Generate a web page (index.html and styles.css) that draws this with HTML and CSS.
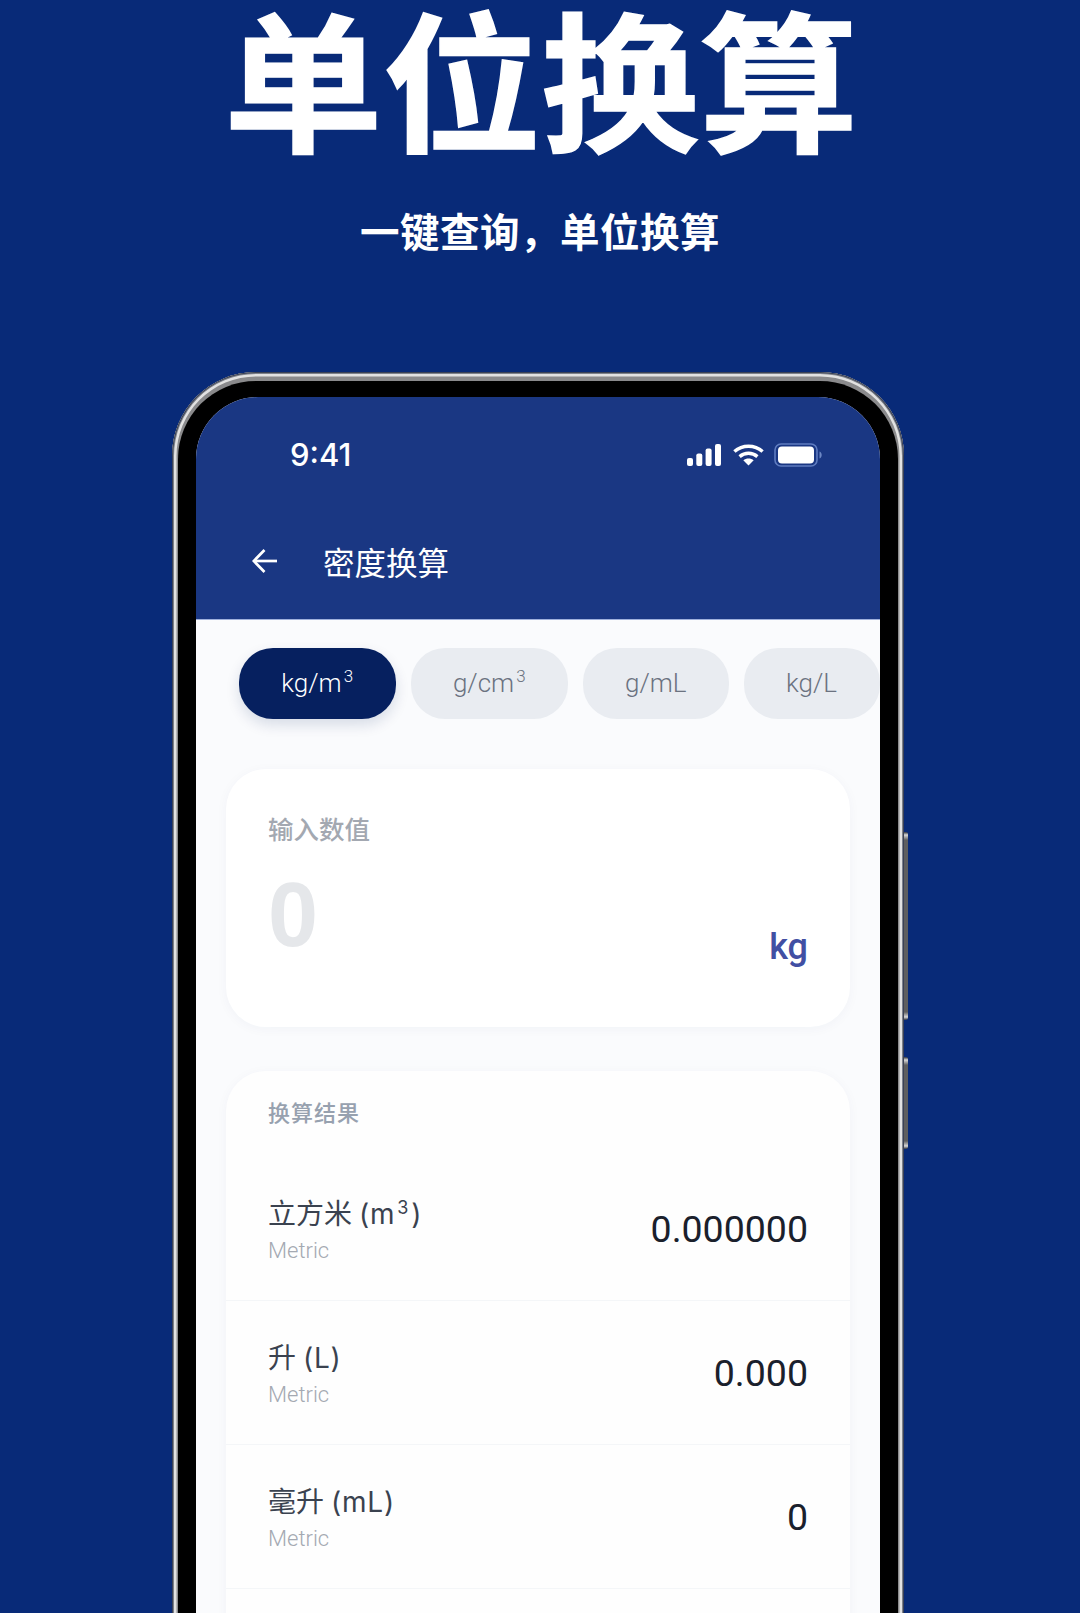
FILE: index.html
```html
<!DOCTYPE html>
<html lang="zh-CN">
<head>
<meta charset="utf-8">
<title>单位换算</title>
<link rel="stylesheet" href="styles.css">
</head>
<body>
<main class="poster">
  <h1 class="headline">单位换算</h1>
  <p class="subline">一键查询，单位换算</p>
  <div class="phone">
    <span class="side-btn side-btn-a"></span>
    <span class="side-btn side-btn-b"></span>
    <div class="rim">
      <div class="bezel">
        <div class="screen">
          <header class="app-header">
            <div class="status">
              <span class="time">9:41</span>
              <div class="status-icons">
                <svg class="ic-signal" width="34" height="22" viewBox="0 0 34 22" fill="#fff"><rect x="0" y="14" width="6" height="8" rx="2"/><rect x="9.3" y="9.5" width="6" height="12.5" rx="2"/><rect x="18.6" y="4.5" width="6" height="17.5" rx="2"/><rect x="28" y="0" width="6" height="22" rx="2"/></svg>
                <svg class="ic-wifi" width="31" height="22" viewBox="0 0 31 22" fill="none" stroke="#fff" stroke-width="3.4"><path d="M1.4 7.6C9.4.4 21.6.4 29.6 7.6"/><path d="M6.6 12.6c5.2-4.4 12.6-4.4 17.8 0"/><path d="M15.5 21.6l-5.2-5.4c3-2.4 7.4-2.4 10.4 0z" fill="#fff" stroke="none"/></svg>
                <svg class="ic-battery" width="48" height="24" viewBox="0 0 48 24" fill="none"><rect x="1" y="1" width="42" height="22" rx="6" stroke="#5f7cc0" stroke-width="1.6"/><rect x="4" y="3.6" width="36" height="16.8" rx="4" fill="#fff"/><path d="M45.5 8.5c1.6.6 2.2 2 2.2 3.5s-.6 2.9-2.2 3.5z" fill="#6d87c4"/></svg>
              </div>
            </div>
            <nav class="nav">
              <svg class="ic-back" width="26" height="24" viewBox="0 0 26 24" fill="none" stroke="#fff" stroke-width="2.7"><path d="M25 12H2"/><path d="M12.5 1L1.8 12l10.7 11"/></svg>
              <span class="nav-title">密度换算</span>
            </nav>
          </header>
          <div class="body">
            <div class="chips">
              <span class="chip chip-on">kg/m<span class="sup">3</span></span>
              <span class="chip">g/cm<span class="sup">3</span></span>
              <span class="chip chip-mid">g/mL</span>
              <span class="chip chip-last">kg/L</span>
            </div>
            <section class="card card-input">
              <div class="input-label">输入数值</div>
              <div class="input-row">
                <span class="input-value">0</span>
                <span class="input-unit">kg</span>
              </div>
            </section>
            <section class="card card-results">
              <div class="results-label">换算结果</div>
              <div class="row">
                <div><div class="row-name">立方米 <span class="lat">(m<span class="sup-name">3</span>)</span></div><div class="row-sub">Metric</div></div>
                <div class="row-value">0.000000</div>
              </div>
              <div class="row">
                <div><div class="row-name">升 <span class="lat">(L)</span></div><div class="row-sub">Metric</div></div>
                <div class="row-value">0.000</div>
              </div>
              <div class="row">
                <div><div class="row-name">毫升 <span class="lat">(mL)</span></div><div class="row-sub">Metric</div></div>
                <div class="row-value">0</div>
              </div>
            </section>
          </div>
        </div>
      </div>
    </div>
  </div>
</main>
</body>
</html>
```

FILE: styles.css
```css
* { box-sizing: border-box; }
html, body { margin: 0; height: 1613px; overflow: hidden; }
body {
  background: #082a78;
  font-family: Roboto, "Noto Sans CJK SC", sans-serif;
}
.poster {
  height: 1613px;
  display: flex;
  flex-direction: column;
  overflow: hidden;
}
.headline {
  flex: none;
  margin: 0;
  height: 170px;
  padding-left: 2px;
  text-align: center;
  color: #fff;
  font-size: 151px;
  line-height: 150px;
  font-weight: 700;
  -webkit-text-stroke: 1.5px #fff;
  font-family: "Noto Sans CJK SC", sans-serif;
  transform: scaleX(1.05);
}
.subline {
  flex: none;
  margin: 36px 0 0;
  height: 48px;
  text-align: center;
  color: #fff;
  font-size: 39.5px;
  line-height: 48px;
  letter-spacing: .5px;
  font-weight: 700;
  font-family: "Noto Sans CJK SC", sans-serif;
}
.phone {
  position: relative;
  margin: 118px 0 0 172px;
  width: 732px;
  height: 1400px;
  flex: none;
}
.side-btn {
  position: absolute;
  right: -4px;
  width: 4px;
  background: linear-gradient(#30343d, #d8d8d8 3px, #5f5f5f 8px, #5f5f5f calc(100% - 8px), #d8d8d8 calc(100% - 3px), #30343d);
  border-radius: 0 2px 2px 0;
}
.side-btn-a { top: 460px; height: 188px; }
.side-btn-b { top: 685px; height: 92px; }
.rim {
  height: 100%;
  padding: 9px 6px 0;
  border-radius: 84px;
  background: #8a8a8c;
  box-shadow: inset 0 0 0 1px #3b4256, inset 0 0 0 2px #7d818a, inset 0 0 0 4.5px #e2e2e2;
}
.bezel {
  height: 100%;
  padding: 16px 18px 0;
  border-radius: 78px 78px 0 0;
  background: #000;
}
.screen {
  height: 100%;
  border-radius: 62px 62px 0 0;
  overflow: hidden;
  background: #fafbfd;
  display: flex;
  flex-direction: column;
}
.app-header {
  height: 223px;
  flex: none;
  background: #1a3783;
  border-bottom: 1px solid #9fb0dc;
  padding: 44px 58px 0 56px;
  color: #fff;
}
.status {
  display: flex;
  justify-content: space-between;
  align-items: center;
  height: 28px;
  padding-left: 38px;
}
.time { font-family: Inter, sans-serif; font-size: 31px; font-weight: 500; line-height: 28px; }
.status-icons { display: flex; align-items: center; gap: 12px; }
.ic-battery { margin-left: -2px; }
.nav {
  display: flex;
  align-items: center;
  gap: 45px;
  margin-top: 72px;
  height: 40px;
}
.nav-title {
  font-size: 31.5px;
  line-height: 40px;
  font-weight: 400;
  font-family: "Noto Sans CJK SC", sans-serif;
}
.body { flex: 1; min-height: 0; padding-top: 28px; display: flex; flex-direction: column; }
.chips {
  flex: none;
  display: flex;
  gap: 14.5px;
  padding-left: 42.5px;
  height: 71px;
  margin-bottom: 50px;
}
.chip {
  flex: none;
  width: 157.5px;
  height: 71px;
  border-radius: 34px;
  background: #e9ecf1;
  color: #6b7280;
  font-size: 26px;
  line-height: 71px;
  text-align: center;
  font-weight: 300;
}
.chip-on {
  background: #06205f;
  color: #fff;
  box-shadow: 0 6px 14px rgba(6, 32, 95, .14);
}
.chip-mid { width: 146.5px; }
.chip-last { width: 136px; }
.sup {
  display: inline-block;
  margin-left: 2px;
  font-size: 17px;
  line-height: 1;
  vertical-align: 10px;
}
.card {
  margin: 0 30px;
  background: #fff;
  border-radius: 40px;
  box-shadow: 0 2px 12px rgba(20, 40, 90, .04);
}
.card-input {
  flex: none;
  height: 258px;
  padding: 43px 42px 0;
  margin-bottom: 44px;
}
.input-label {
  color: #a3a8b1;
  font-size: 25.5px;
  line-height: 32px;
  font-weight: 500;
  font-family: "Noto Sans CJK SC", sans-serif;
}
.input-row {
  display: flex;
  justify-content: space-between;
  align-items: flex-start;
  margin-top: 26px;
}
.input-value {
  color: #e5e7ea;
  font-size: 90px;
  line-height: 90px;
  font-weight: 700;
  font-family: "Liberation Sans", sans-serif;
}
.input-unit {
  margin-top: 55px;
  color: #414fa3;
  font-size: 36px;
  line-height: 44px;
  font-weight: 500;
}
.card-results { flex: 1; background: #fefefe; }
.results-label {
  height: 86px;
  padding: 26px 42px 0;
  color: #97a1af;
  font-size: 22px;
  line-height: 28px;
  letter-spacing: 1px;
  font-weight: 500;
  font-family: "Noto Sans CJK SC", sans-serif;
}
.row {
  height: 144px;
  padding: 0 42px;
  display: flex;
  justify-content: space-between;
  align-items: center;
  border-bottom: 1px solid #f4f6f8;
}
.row-name {
  color: #3a424f;
  font-size: 28px;
  line-height: 38px;
  padding-top: 2px;
}
.lat { font-family: Inter, sans-serif; letter-spacing: .8px; }
.sup-name {
  display: inline-block;
  margin: 0 2px;
  font-size: 18px;
  line-height: 1;
  vertical-align: 10px;
}
.row-sub {
  margin-top: 3px;
  color: #a4a9b2;
  font-size: 22px;
  line-height: 28px;
  font-weight: 300;
}
.row-value {
  color: #1a202c;
  font-size: 37.5px;
  line-height: 44px;
  font-weight: 400;
}
```
